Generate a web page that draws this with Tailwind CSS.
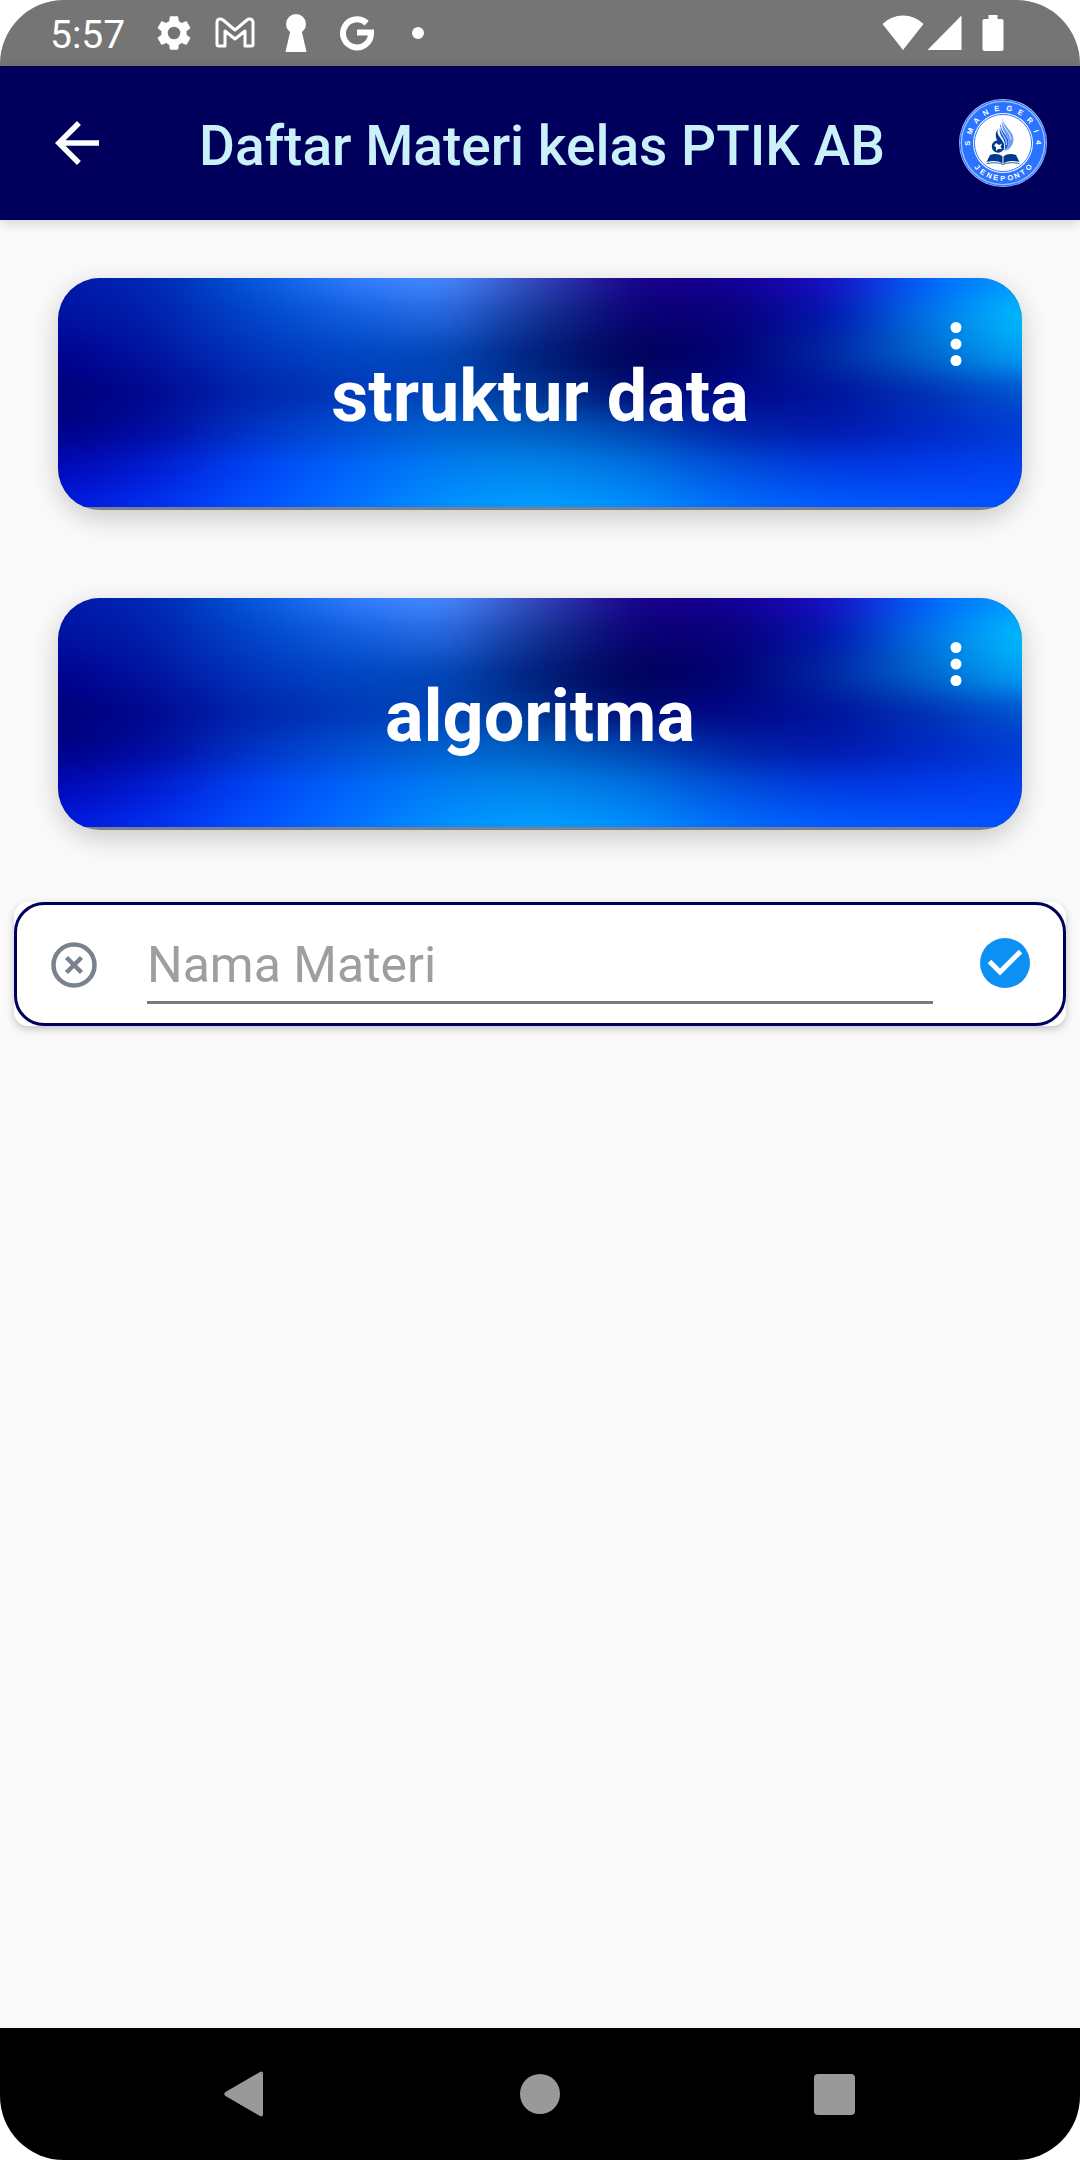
<!DOCTYPE html>
<html lang="id">
<head>
<meta charset="utf-8">
<meta name="viewport" content="width=device-width, initial-scale=1">
<title>Daftar Materi kelas PTIK AB</title>
<script src="https://cdn.jsdelivr.net/npm/@tailwindcss/browser@4"></script>
</head>
<body class="bg-white font-[Roboto,sans-serif]">
<div class="flex min-h-screen flex-col overflow-hidden rounded-[64px] bg-[#fafafa]">

  <!-- Status bar -->
  <div class="flex h-[66px] items-center justify-between bg-[#757575] pr-[76px] pl-[50px] text-white">
    <div class="flex items-center">
      <span class="w-[93px] pt-1 text-[39px] leading-[48px]">5:57</span>
      <span class="flex w-[61px] justify-center">
        <svg class="size-[42px]" viewBox="0 0 24 24" fill="currentColor"><path d="M19.14 12.94c.04-.3.06-.61.06-.94 0-.32-.02-.64-.07-.94l2.03-1.58a.49.49 0 0 0 .12-.61l-1.92-3.32a.488.488 0 0 0-.59-.22l-2.39.96c-.5-.38-1.03-.7-1.62-.94l-.36-2.54a.484.484 0 0 0-.48-.41h-3.84c-.24 0-.43.17-.47.41l-.36 2.54c-.59.24-1.13.57-1.62.94l-2.39-.96c-.22-.08-.47 0-.59.22L2.74 8.87c-.12.21-.08.47.12.61l2.03 1.58c-.05.3-.09.63-.09.94s.02.64.07.94l-2.03 1.58a.49.49 0 0 0-.12.61l1.92 3.32c.12.22.37.29.59.22l2.39-.96c.5.38 1.03.7 1.62.94l.36 2.54c.05.24.24.41.48.41h3.84c.24 0 .44-.17.47-.41l.36-2.54c.59-.24 1.13-.56 1.62-.94l2.39.96c.22.08.47 0 .59-.22l1.92-3.32c.12-.22.07-.47-.12-.61l-2.01-1.58zM12 15.6A3.6 3.6 0 1 1 12 8.400a3.600 3.600 0 0 1 0 7.200z"/></svg>
      </span>
      <span class="flex w-[61px] justify-center">
        <svg class="h-[32px] w-[40px]" viewBox="0 0 40 32" fill="none" stroke="currentColor" stroke-width="3" stroke-linejoin="round"><path d="M10 29V14L20 22L30 14V29H36.500Q38 29 38 27.500V5Q37.500 1.500 34 2Q33 2.200 32 3L20 13L8 3Q6 1.500 4 2.200Q2 3 2 5.500V27.500Q2 29 3.500 29Z"/></svg>
      </span>
      <span class="flex w-[61px] justify-center">
        <svg class="h-[38px] w-[22px]" viewBox="0 0 22 38" fill="currentColor"><circle cx="11" cy="10" r="10"/><path d="M6 14H16L21.500 38H.5Z"/></svg>
      </span>
      <span class="flex w-[61px] justify-center">
        <svg class="size-[36px]" viewBox="0 0 36 36" fill="none" stroke="currentColor" stroke-width="6"><path d="M27.600 8.200A14 14 0 1 0 32 18V17.500H18" /></svg>
      </span>
      <span class="flex w-[61px] justify-center"><span class="size-3 rounded-full bg-white"></span></span>
    </div>
    <div class="flex items-center">
      <svg class="h-[36px] w-[42px]" viewBox="0 0 42 36" fill="currentColor"><path d="M.5 9Q9 .5 21 .5T41.500 9L21 35Z"/></svg>
      <svg class="ml-[3px] h-[36px] w-[35px]" viewBox="0 0 35 36" fill="currentColor"><path d="M34.500 .5V35H.5Z"/></svg>
      <svg class="ml-5 h-[36px] w-[22px]" viewBox="0 0 22 36" fill="currentColor"><path d="M6.500 0H15.500V4H19.500Q21.500 4 21.500 6V34Q21.500 36 19.500 36H2.500Q.5 36 .5 34V6Q.5 4 2.500 4H6.500Z"/></svg>
    </div>
  </div>

  <!-- App bar -->
  <header class="relative flex h-[154px] items-center bg-[#00005c] pr-[32px] pl-[44px] shadow-[0_3px_12px_rgba(0,0,0,0.16)]">
    <button type="button" aria-label="Kembali" class="flex size-[66px] items-center justify-center text-white">
      <svg class="size-[66px]" viewBox="0 0 24 24" fill="currentColor"><path d="M20 11H7.830l5.590-5.590L12 4l-8 8 8 8 1.410-1.410L7.830 13H20v-2z"/></svg>
    </button>
    <h1 class="grow pt-1.5 pl-4 text-center text-[55px] leading-[66px] font-medium whitespace-nowrap text-[#caf0f8]">Daftar Materi kelas PTIK AB</h1>
    <svg class="size-[90px] shrink-0" viewBox="0 0 90 90" role="img" aria-label="SMA Negeri 4 Jeneponto">
      <circle cx="45" cy="45" r="44" fill="#9cc0ff"/>
      <circle cx="45" cy="45" r="42.800" fill="none" stroke="#2a6cf6" stroke-width="1"/>
      <circle cx="45" cy="45" r="41" fill="#2b74ff"/>
      <circle cx="45" cy="45" r="30" fill="#fff"/>
      <circle cx="45" cy="45" r="28.600" fill="none" stroke="#2b74ff" stroke-width="1"/>
      <g fill="#fff" font-family="Liberation Sans, sans-serif" font-weight="700" font-size="7.500">
        <text x="12.500 13.400 18.400 18.400 26.400 36.700 48 58.900 68.200 75.300 75.300 77.500" y="47.700 36.900 26.200 26.200 18.200 13.500 12.500 15.500 22.100 33.100 33.100 42.300" rotate="-90 -70 -50 -50 -30 -10 10 30 50 70 70 90">SMA NEGERI 4</text>
        <text x="15.900 21.300 27.700 34.800 42.300 49.900 57.300 64.200 70.400" y="69.400 74.700 78.800 81.600 82.900 82.700 80.900 77.800 73.300" rotate="46 34 23 11 0 -11 -23 -34 -46">JENEPONTO</text>
      </g>
      <path d="M44.500 20C44 27 55.500 33 55.500 41C55.500 47 51.500 51 48 53C51 47 51.500 43 48.500 38C45.500 33 42.500 28 44.500 20Z" fill="#6c9cf4"/>
      <path d="M43 26C42 33 50.500 38 50.500 44C50.500 48 49 51 46.500 53C47.500 47 47 44 44.500 40C41 35 41 31 43 26Z" fill="#1f5fd8"/>
      <path d="M40 31C37 38 46.500 41 46 48C46 50.500 45.500 52 44.500 53C44.500 47 41 45 39 42C37 38 37.500 34 40 31Z" fill="#003a96"/>
      <path d="M44.500 22C44 30 53.500 35 53 42M42.500 29C42 36 49.500 40 48.500 47" fill="none" stroke="#fff" stroke-width=".8"/>
      <circle cx="40" cy="48.500" r="6.200" fill="#003a8c"/>
      <path d="M38 45L41 47L44 45.500L42.500 49L44 51L40 51L38 53L38 49L36 48Z" fill="#fff"/>
      <path d="M32 57Q39 54.500 45 58.500Q51 54.500 58 57L61.500 64Q52 61.500 45 65.500Q38 61.500 28.500 64Z" fill="#003a8c"/>
      <path d="M45 58V65.500" stroke="#fff" stroke-width="1"/>
      <path d="M28.500 65.500Q39 63.500 45 66.500Q51 63.500 61.500 65.500" fill="none" stroke="#003a8c" stroke-width=".8"/>
    </svg>
  </header>

  <main class="flex grow flex-col pt-[58px]">
    <ul class="flex flex-col gap-[88px] px-[58px]">
      <li class="relative h-[232px] overflow-clip rounded-[42px] bg-[#7a808c] shadow-[0_8px_28px_rgba(0,0,0,0.2)]">
        <svg class="absolute inset-x-0 top-0 h-[229px] w-full" viewBox="0 0 964 229" preserveAspectRatio="none" aria-hidden="true">
          <defs>
            <filter id="soft" filterUnits="userSpaceOnUse" x="-120" y="-60" width="1204" height="349" color-interpolation-filters="sRGB"><feGaussianBlur stdDeviation="26 14"/></filter>
            <g id="mesh"></g>
          </defs>
          <use href="#mesh"/>
        </svg>
        <a href="#struktur-data" class="relative flex h-full items-center justify-center pt-1.5 text-[72px] leading-[84px] font-bold text-white">struktur data</a>
        <button type="button" aria-label="Menu struktur data" class="absolute top-[33px] right-[33px] flex size-[66px] items-center justify-center text-white">
          <svg class="size-[66px]" viewBox="0 0 24 24" fill="currentColor"><circle cx="12" cy="6" r="2"/><circle cx="12" cy="12" r="2"/><circle cx="12" cy="18" r="2"/></svg>
        </button>
      </li>
      <li class="relative h-[232px] overflow-clip rounded-[42px] bg-[#7a808c] shadow-[0_8px_28px_rgba(0,0,0,0.2)]">
        <svg class="absolute inset-x-0 top-0 h-[229px] w-full" viewBox="0 0 964 229" preserveAspectRatio="none" aria-hidden="true"><use href="#mesh"/></svg>
        <a href="#algoritma" class="relative flex h-full items-center justify-center pt-1.5 text-[72px] leading-[84px] font-bold text-white">algoritma</a>
        <button type="button" aria-label="Menu algoritma" class="absolute top-[33px] right-[33px] flex size-[66px] items-center justify-center text-white">
          <svg class="size-[66px]" viewBox="0 0 24 24" fill="currentColor"><circle cx="12" cy="6" r="2"/><circle cx="12" cy="12" r="2"/><circle cx="12" cy="18" r="2"/></svg>
        </button>
      </li>
    </ul>

    <!-- New item form -->
    <form class="mx-[14px] mt-[72px] rounded-[14px] bg-white shadow-[0_3px_8px_rgba(0,0,0,0.22)]">
      <div class="flex h-[124px] items-center rounded-[30px] border-3 border-[#00005c] px-[32px]">
        <button type="button" aria-label="Batal" class="flex w-[50px] shrink-0 justify-center text-[#7a828e]">
          <svg class="size-[50px]" viewBox="0 0 50 50" fill="none" stroke="currentColor"><circle cx="25" cy="26" r="20.500" stroke-width="4.500"/><path d="M17.500 18.500L32.500 33.500M32.500 18.500L17.500 33.500" stroke-width="4.500"/></svg>
        </button>
        <input type="text" aria-label="Nama Materi" placeholder="Nama Materi" class="ml-12 h-20 min-w-0 grow border-b-3 border-[#7a7a7a] pt-1 text-[50px] leading-[60px] text-black outline-none placeholder:text-[#9e9e9e]">
        <button type="submit" aria-label="Simpan" class="ml-[46px] flex w-[52px] shrink-0 justify-center">
          <svg class="size-[52px]" viewBox="0 0 52 52"><circle cx="26" cy="25" r="25" fill="#0d90f3"/><path d="M10.500 23.500L21 34L41.500 13.500" fill="none" stroke="#fff" stroke-width="5"/></svg>
        </button>
      </div>
    </form>
  </main>

  <!-- System navigation -->
  <nav class="grid h-[132px] grid-cols-3 items-center bg-black px-[98px] text-[#999999]">
    <button type="button" aria-label="Kembali" class="flex justify-center"><svg class="size-12" viewBox="0 0 48 48" fill="currentColor"><path d="M4.500 22L39 2Q42 .5 42 4V44Q42 47.500 39 46L4.500 26Q2 24 4.500 22Z"/></svg></button>
    <button type="button" aria-label="Beranda" class="flex justify-center"><span class="size-10 rounded-full bg-[#999999]"></span></button>
    <button type="button" aria-label="Aplikasi terbaru" class="flex justify-center"><span class="size-[41px] rounded-[4px] bg-[#999999]"></span></button>
  </nav>
</div>

<script>
// Mesh background of the cards: rows of colours, blended by a blur.
const rows = [
  '001aa8 0028b4 0058da 2f7cff 4a8cff 3444b8 180088 140094 1c0cc4 0062ff 009cff',
  '0010a0 001faa 0044c8 0c5cdc 2868e0 10308e 080070 08007c 0014ac 0074e8 00c0ff',
  '000090 0014a0 0034bc 0046c4 0048b8 001c78 000054 000074 0028a4 0068cc 00a6fa',
  '000078 000890 0024ac 0038b8 0044b4 00348c 000a74 000688 00129a 0030b4 0054d0',
  '000084 000ca0 0034c4 0050d4 0064d0 0060c4 0048b4 0024a8 0018ac 0028c4 003cd4',
  '0008b8 001cd4 0044f8 0064fc 0080f4 0088ec 0074e4 0050dc 003ce4 003cec 0044f4',
  '0018dc 0030f0 0050ff 0070ff 0092ff 009eff 008eff 006cff 005cff 0056ff 0050ff'
];
const step = 229 / 6;
const strips = rows.map((row, i) => {
  const stops = row.split(' ').map((c, k) => `<stop offset="${k / 10}" stop-color="#${c}"/>`).join('');
  const top = i === 0 ? -60 : (i - 0.5) * step;
  const bottom = i === 6 ? 289 : (i + 0.5) * step;
  return `<linearGradient id="row${i}" gradientUnits="userSpaceOnUse" x1="0" x2="964">${stops}</linearGradient>` +
    `<rect x="-120" y="${top}" width="1204" height="${bottom - top + 1}" fill="url(#row${i})"/>`;
}).join('');
document.getElementById('mesh').innerHTML = `<g filter="url(#soft)">${strips}</g>`;
</script>
</body>
</html>
